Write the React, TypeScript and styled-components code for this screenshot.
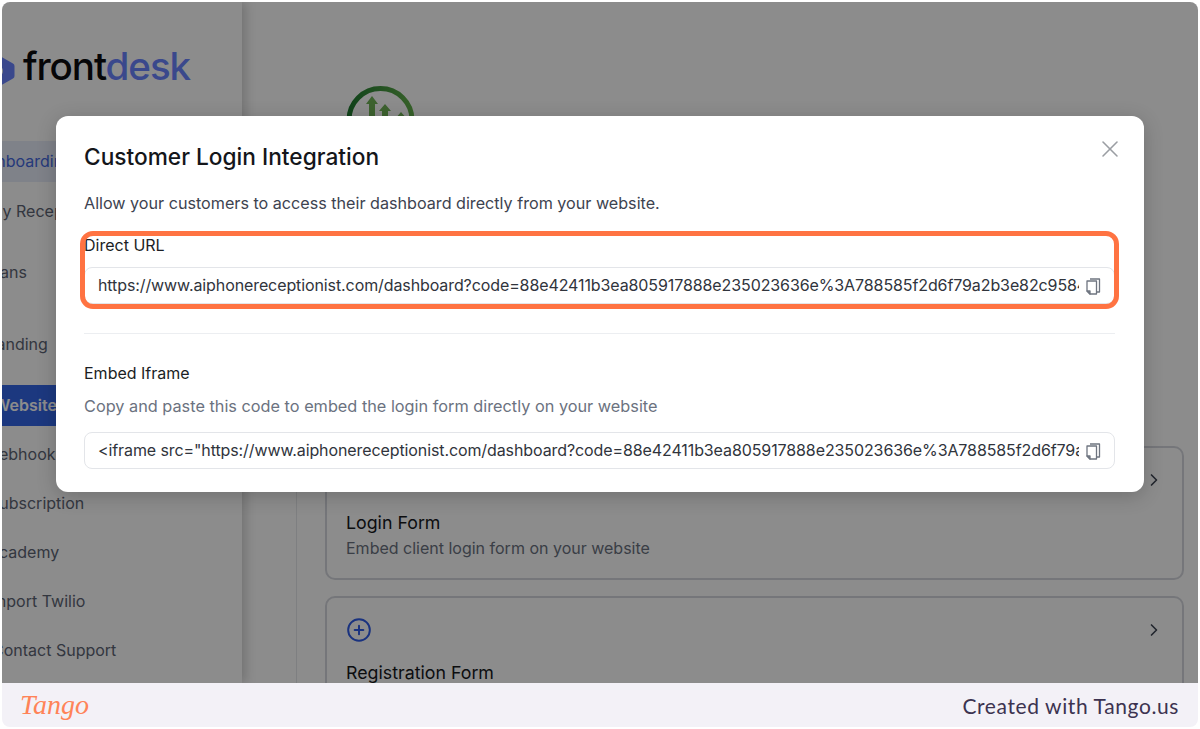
import React from 'react';
import styled, { createGlobalStyle } from 'styled-components';
import { ChevronRight, CirclePlus, X } from 'lucide-react';

const URL_VALUE =
  'https://www.aiphonereceptionist.com/dashboard?code=88e42411b3ea805917888e235023636e%3A788585f2d6f79a2b3e82c9584f0d1e7a';
const IFRAME_VALUE = `<iframe src="${URL_VALUE}" width="100%" height="600"></iframe>`;

const GlobalStyle = createGlobalStyle`
  * { box-sizing: border-box; }
  html, body { margin: 0; padding: 0; background: #fff; }
  body { font-family: 'Inter', 'Liberation Sans', sans-serif; }
`;

const Page = styled.div`
  width: 1200px;
  height: 729px;
  padding: 2px;
  overflow: hidden;
`;
const Frame = styled.div`
  height: 725px;
  border-radius: 8px;
  background: #f3f1f7;
  overflow: hidden;
`;
const Screen = styled.div`
  position: relative;
  height: 681px;
  display: flex;
  background: #fff;
  overflow: hidden;
`;
const Sidebar = styled.aside`
  width: 240px;
  flex-shrink: 0;
  box-shadow: 4px 0 10px rgba(0, 0, 0, 0.18);
  padding-top: 40px;
`;
const Brand = styled.div`
  display: flex;
  align-items: center;
  gap: 7px;
  height: 48px;
  margin-left: -23px;
  margin-bottom: 51px;
`;
const BrandIcon = styled.svg`
  flex-shrink: 0;
  margin-top: 10px;
`;
const BrandName = styled.span`
  font-size: 38.6px;
  font-weight: 500;
  letter-spacing: -1.1px;
  color: #0b0b0f;
`;
const BrandAccent = styled.span`
  color: #6a84ff;
`;
const NavItem = styled.div<{ $gap?: number; $state?: 'active' | 'current' }>`
  height: 41px;
  margin-top: ${(p) => p.$gap ?? 8}px;
  padding-bottom: 2px;
  display: flex;
  align-items: center;
  font-size: 16px;
  white-space: nowrap;
  color: ${(p) =>
    p.$state === 'active' ? '#fff' : p.$state === 'current' ? '#4468e0' : '#5d6474'};
  font-weight: ${(p) => (p.$state === 'active' ? 600 : 400)};
  background: ${(p) =>
    p.$state === 'active' ? '#3467e8' : p.$state === 'current' ? '#e8edf9' : 'transparent'};
`;
const NavLabel = styled.span<{ $shift: number }>`
  margin-left: ${(p) => p.$shift}px;
`;
const Main = styled.main`
  flex: 1;
  padding: 84px 14px 0 54px;
  min-width: 0;
`;
const CompanyLogo = styled.svg`
  display: block;
  width: 72px;
  height: 72px;
  margin-left: 50px;
`;
const Panel = styled.section`
  margin-top: 142px;
  padding: 146px 0 0 28px;
  border-left: 1px solid #e5e7eb;
`;
const Card = styled.div`
  border: 2px solid #d6d8de;
  border-radius: 10px;
  padding: 19px 18px 0 19px;
  margin-bottom: 16px;
  height: 134px;
`;
const CardRow = styled.div`
  display: flex;
  justify-content: space-between;
  align-items: center;
  height: 26px;
  color: #3f4654;
`;
const CardIcon = styled.span`
  display: block;
  width: 26px;
  height: 26px;
  color: #2f5ce8;
`;
const CardTitle = styled.div`
  margin-top: 18px;
  font-size: 17.8px;
  line-height: 24px;
  color: #16181d;
`;
const CardText = styled.div`
  margin-top: 2px;
  font-size: 16px;
  line-height: 22px;
  color: #6b7280;
`;
const Overlay = styled.div`
  position: absolute;
  inset: 0;
  display: flex;
  justify-content: center;
  align-items: flex-start;
  padding-top: 114px;
  background: rgba(0, 0, 0, 0.45);
`;
const Modal = styled.div`
  position: relative;
  width: 1088px;
  height: 376px;
  padding: 27px 29px 0 28px;
  background: #fff;
  border-radius: 12px;
  box-shadow: 0 4px 20px rgba(0, 0, 0, 0.2);
`;
const ModalTitle = styled.h2`
  margin: 0;
  font-size: 22.7px;
  line-height: 28px;
  font-weight: 500;
  color: #14161a;
`;
const CloseButton = styled.span`
  position: absolute;
  top: 19px;
  right: 20px;
  color: #9b9ea3;
  line-height: 0;
`;
const Lead = styled.p`
  margin: 20px 0 0;
  font-size: 16.15px;
  line-height: 24px;
  color: #3d4350;
`;
const FieldLabel = styled.div<{ $top: number }>`
  margin-top: ${(p) => p.$top}px;
  font-size: 16px;
  line-height: 20px;
  color: #1b1e24;
`;
const FieldHint = styled.p`
  margin: 11px 0 0;
  font-size: 16.3px;
  line-height: 24px;
  color: #6b7280;
`;
const CopyField = styled.div<{ $top: number }>`
  margin-top: ${(p) => p.$top}px;
  height: 37px;
  display: flex;
  align-items: center;
  gap: 6px;
  padding: 0 13px;
  border: 1.5px solid #e3e5e9;
  border-radius: 8px;
`;
const FieldValue = styled.span`
  flex: 1;
  min-width: 0;
  overflow: hidden;
  white-space: nowrap;
  font-size: 16px;
  letter-spacing: -0.1px;
  line-height: 20px;
  margin-bottom: 2px;
  color: #30343c;
`;
const Rule = styled.hr`
  margin: 29px 0 0;
  border: 0;
  border-top: 1px solid #eceef1;
`;
const Highlight = styled.div`
  position: absolute;
  left: 24px;
  top: 115px;
  width: 1039px;
  height: 78px;
  border: 5.5px solid #ff7342;
  border-radius: 13px;
  pointer-events: none;
`;
const Footer = styled.footer`
  height: 44px;
  display: flex;
  align-items: center;
  justify-content: space-between;
  padding: 0 19px 0 18px;
`;
const TangoMark = styled.span`
  font-family: 'Liberation Serif', serif;
  font-style: italic;
  font-size: 28px;
  line-height: 1;
  color: #ff8358;
`;
const FooterText = styled.span`
  font-family: 'Lato', sans-serif;
  font-size: 21px;
  letter-spacing: 0.6px;
  color: #3c3350;
`;

const CopyIcon = () => (
  <svg width="16" height="18" viewBox="0 0 16 18" fill="none" stroke="#6f7580" strokeWidth="1.3" strokeLinejoin="round" style={{ flexShrink: 0 }}>
    <path d="M5 2h9.5v13H12" />
    <path d="M2 4h9.5v13H5l-3-3z" />
    <path d="M2 14h3v3z" fill="#9aa0aa" />
  </svg>
);

const nav = [
  { label: 'Onboarding', shift: -18, gap: 0, state: 'current' as const },
  { label: 'My Receptionist', shift: -14, gap: 9 },
  { label: 'Plans', shift: -16, gap: 20 },
  { label: 'Branding', shift: -22, gap: 31 },
  { label: 'Website', shift: -8, gap: 20, state: 'active' as const },
  { label: 'Webhook', shift: -18, gap: 8 },
  { label: 'Subscription', shift: -13, gap: 8 },
  { label: 'Academy', shift: -14, gap: 8 },
  { label: 'Import Twilio', shift: -14, gap: 8 },
  { label: 'Contact Support', shift: -10, gap: 8 },
];

export default function App() {
  return (
    <Page>
      <GlobalStyle />
      <Frame>
        <Screen>
          <Sidebar>
            <Brand>
              <BrandIcon width="37" height="34" viewBox="0 0 37 34">
                <path d="M19 1l15 8.5a3 3 0 0 1 1.5 2.6v9.8a3 3 0 0 1-1.5 2.6L19 33 3 24V10z" fill="#6a84ff" />
                <circle cx="18" cy="17" r="6" fill="#fff" />
              </BrandIcon>
              <BrandName>
                front<BrandAccent>desk</BrandAccent>
              </BrandName>
            </Brand>
            {nav.map((item) => (
              <NavItem key={item.label} $gap={item.gap} $state={item.state}>
                <NavLabel $shift={item.shift}>{item.label}</NavLabel>
              </NavItem>
            ))}
          </Sidebar>
          <Main>
            <CompanyLogo viewBox="0 0 72 72" fill="none">
              <defs>
                <linearGradient id="ring" x1="0" y1="0" x2="1" y2="0">
                  <stop offset="0" stopColor="#1f7a30" />
                  <stop offset="1" stopColor="#63b04c" />
                </linearGradient>
              </defs>
              <circle cx="34.5" cy="34" r="31.5" stroke="url(#ring)" strokeWidth="5" />
              <path d="M23 34V18h-3l6-8 6 8h-3v16z" fill="#6fb257" />
              <path d="M36 34V25h-3l6-7 6 7h-3v9z" fill="#6fb257" />
              <path d="M52 36v-3h-3l6-7 6 7h-3v3z" fill="#6fb257" />
            </CompanyLogo>
            <Panel>
              <Card>
                <CardRow>
                  <span />
                  <ChevronRight size={20} />
                </CardRow>
                <CardTitle>Login Form</CardTitle>
                <CardText>Embed client login form on your website</CardText>
              </Card>
              <Card>
                <CardRow>
                  <CardIcon>
                    <CirclePlus size={26} strokeWidth={1.8} />
                  </CardIcon>
                  <ChevronRight size={20} />
                </CardRow>
                <CardTitle>Registration Form</CardTitle>
                <CardText>Embed client registration form on your website</CardText>
              </Card>
            </Panel>
          </Main>
          <Overlay>
            <Modal>
              <ModalTitle>Customer Login Integration</ModalTitle>
              <CloseButton>
                <X size={28} strokeWidth={1.3} />
              </CloseButton>
              <Lead>Allow your customers to access their dashboard directly from your website.</Lead>
              <FieldLabel $top={20}>Direct URL</FieldLabel>
              <CopyField $top={12}>
                <FieldValue>{URL_VALUE}</FieldValue>
                <CopyIcon />
              </CopyField>
              <Rule />
              <FieldLabel $top={29}>Embed Iframe</FieldLabel>
              <FieldHint>Copy and paste this code to embed the login form directly on your website</FieldHint>
              <CopyField $top={14}>
                <FieldValue>{IFRAME_VALUE}</FieldValue>
                <CopyIcon />
              </CopyField>
              <Highlight />
            </Modal>
          </Overlay>
        </Screen>
        <Footer>
          <TangoMark>Tango</TangoMark>
          <FooterText>Created with Tango.us</FooterText>
        </Footer>
      </Frame>
    </Page>
  );
}
